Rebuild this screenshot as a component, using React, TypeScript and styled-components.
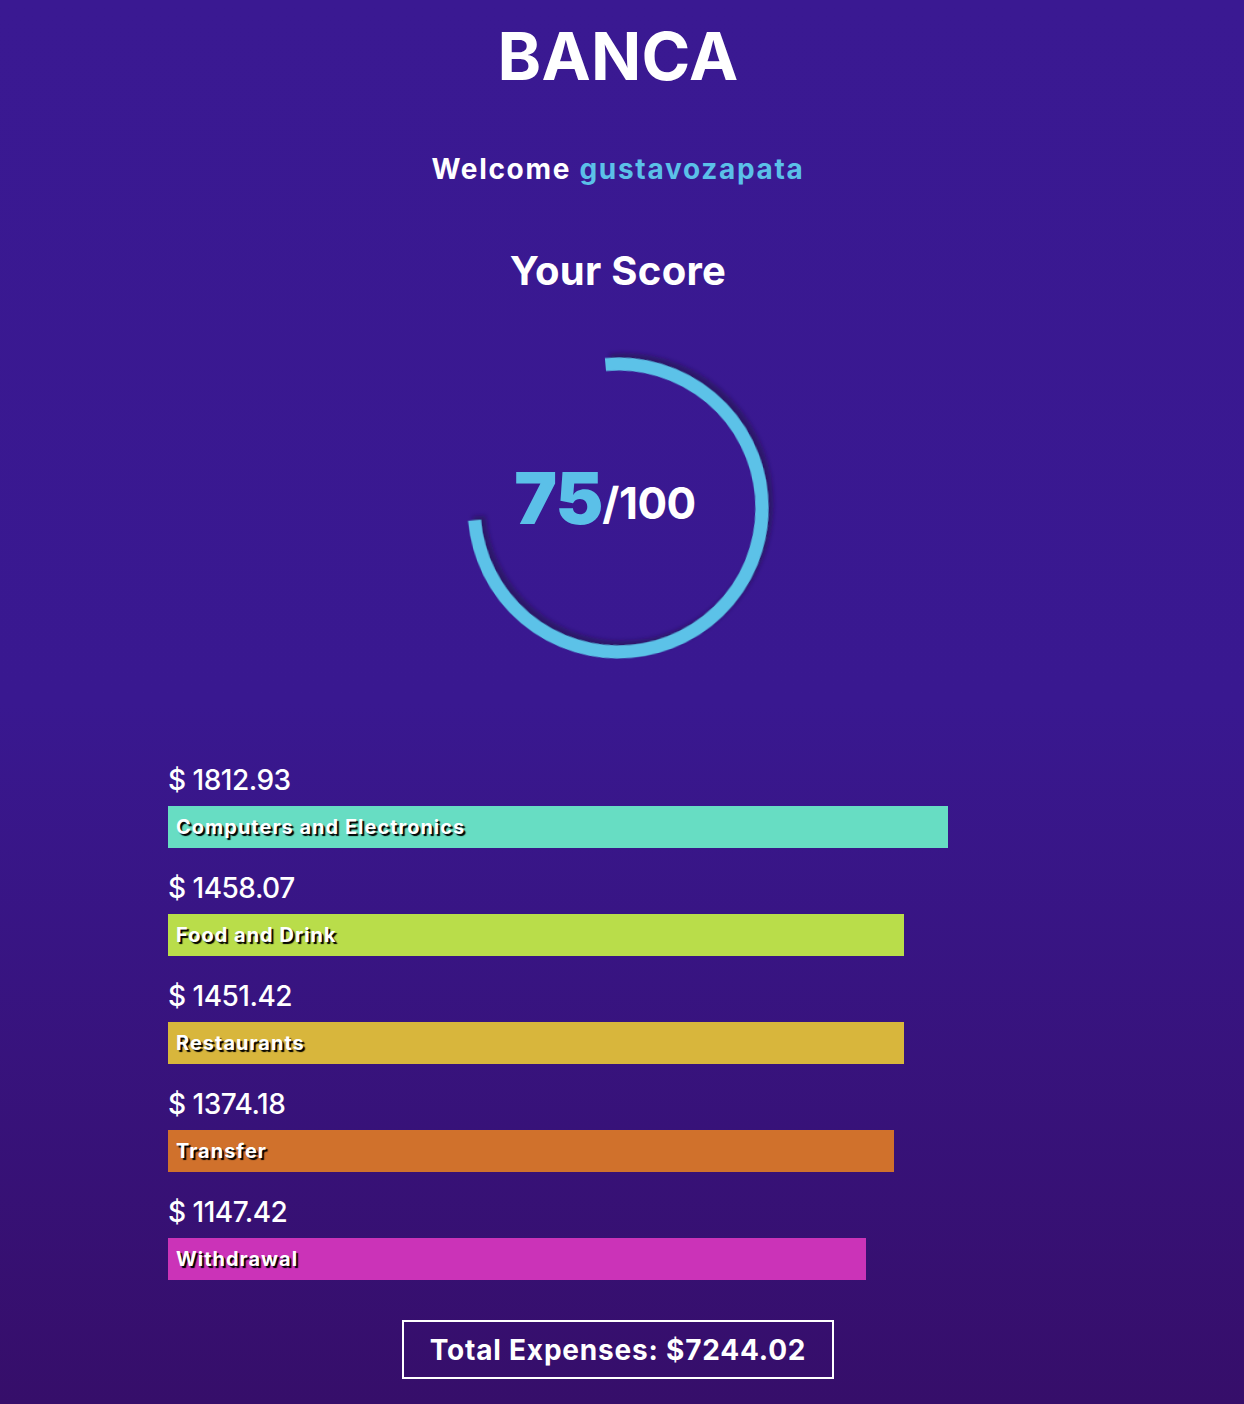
import styled, { createGlobalStyle } from 'styled-components'

const GlobalStyle = createGlobalStyle`
    html, body {
        margin: 0;
        padding: 0;
    }
    body {
        min-height: 1404px;
        background: linear-gradient(180deg, #3a1992 0%, #391890 50%, #360e6a 100%);
        font-family: Inter, "Open Sans", sans-serif;
        color: #fff;
    }
`;

const Page = styled.main`
    display: flex;
    flex-direction: column;
    align-items: center;
    padding: 0 8px 25px 0;
`;

const Logo = styled.h1`
    margin: 16px 0 0;
    font-size: 66px;
    line-height: 80px;
    font-weight: 700;
    letter-spacing: 0.3px;
`;

const Welcome = styled.h2`
    margin: 53px 0 0;
    font-size: 28px;
    line-height: 40px;
    font-weight: 700;
    letter-spacing: 1.7px;

    span {
        color: #5bc0e8;
    }
`;

const ScoreTitle = styled.h2`
    margin: 57px 0 0;
    font-size: 40px;
    line-height: 50px;
    font-weight: 700;
    letter-spacing: 0.3px;
`;

const Gauge = styled.div`
    position: relative;
    width: 320px;
    height: 320px;
    margin-top: 52px;

    svg {
        display: block;
        overflow: visible;
    }
`;

const ScoreText = styled.div`
    position: absolute;
    left: 0;
    right: 0;
    top: 106px;
    text-align: center;
    font-weight: 700;
    white-space: nowrap;
    padding-right: 26px;

    b {
        color: #5bc0e8;
        font-size: 72px;
        letter-spacing: -1px;
    }
    span {
        font-size: 44px;
        letter-spacing: -0.5px;
        vertical-align: 5px;
    }
`;

const Expenses = styled.section`
    width: 908px;
    margin-top: 94px;
    margin-left: 8px;
    display: flex;
    flex-direction: column;
    gap: 22px;
`;

const Item = styled.div`
    display: flex;
    flex-direction: column;
    gap: 8px;
`;

const Amount = styled.div`
    font-size: 28px;
    line-height: 36px;
    font-weight: 500;
    letter-spacing: -0.5px;
`;

const Bar = styled.div<{ $color: string }>`
    height: 42px;
    background: ${p => p.$color};
    display: flex;
    align-items: center;
    padding-left: 8px;
    box-sizing: border-box;
    font-size: 20px;
    font-weight: 700;
    letter-spacing: 1px;
    text-shadow: 2px 2px 1px #000;
`;

const Total = styled.div`
    margin-top: 40px;
    border: 2px solid #fff;
    height: 59px;
    box-sizing: border-box;
    padding: 0 26px;
    display: flex;
    align-items: center;
    font-size: 28px;
    font-weight: 700;
    letter-spacing: 0.8px;
`;

const expenses = [
    { amount: 1812.93, name: 'Computers and Electronics', color: '#67ddc3', width: 780 },
    { amount: 1458.07, name: 'Food and Drink', color: '#b9dd4a', width: 736 },
    { amount: 1451.42, name: 'Restaurants', color: '#d8b63c', width: 736 },
    { amount: 1374.18, name: 'Transfer', color: '#d0712c', width: 726 },
    { amount: 1147.42, name: 'Withdrawal', color: '#cb33b8', width: 698 },
];

const R = 144;
const C = 2 * Math.PI * R;

const App = () => {
    const score = 75;
    const total = expenses.reduce((s, e) => s + e.amount, 0);
    return (
        <>
            <GlobalStyle />
            <Page>
                <Logo>BANCA</Logo>
                <Welcome>Welcome <span>gustavozapata</span></Welcome>
                <ScoreTitle>Your Score</ScoreTitle>
                <Gauge>
                    <svg width="320" height="320" viewBox="0 0 320 320">
                        <defs>
                            <filter id="sh" x="-20%" y="-20%" width="140%" height="140%">
                                <feDropShadow dx="4" dy="5" stdDeviation="2" floodColor="#1a0748" floodOpacity="0.55" />
                            </filter>
                        </defs>
                        <circle
                            cx="160"
                            cy="160"
                            r={R}
                            fill="none"
                            stroke="#5bc2e8"
                            strokeWidth="13"
                            strokeDasharray={`${C * score / 100} ${C}`}
                            transform="rotate(-95 160 160)"
                            filter="url(#sh)"
                        />
                    </svg>
                    <ScoreText><b>{score}</b><span>/100</span></ScoreText>
                </Gauge>
                <Expenses>
                    {expenses.map(e => (
                        <Item key={e.name}>
                            <Amount>$ {e.amount.toFixed(2)}</Amount>
                            <Bar $color={e.color} style={{ width: e.width }}>{e.name}</Bar>
                        </Item>
                    ))}
                </Expenses>
                <Total>Total Expenses: ${total.toFixed(2)}</Total>
            </Page>
        </>
    );
}

export default App;
